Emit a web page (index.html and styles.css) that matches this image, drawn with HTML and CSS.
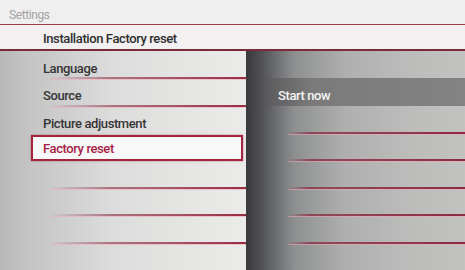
FILE: index.html
```html
<!DOCTYPE html>
<html>
<head>
<meta charset="utf-8">
<link rel="stylesheet" href="styles.css">
</head>
<body>
<div class="screen">
  <div class="title">Settings</div>
  <div class="crumb">Installation Factory reset</div>
  <div class="panes">
    <div class="left">
      <div class="row sep">Language</div>
      <div class="row sep">Source</div>
      <div class="row">Picture adjustment</div>
      <div class="row selected"><span class="box">Factory reset</span></div>
      <div class="row sep"></div>
      <div class="row sep"></div>
      <div class="row sep"></div>
      <div class="row"></div>
    </div>
    <div class="right">
      <div class="row"></div>
      <div class="row band">Start now</div>
      <div class="row sep"></div>
      <div class="row sep"></div>
      <div class="row sep"></div>
      <div class="row sep"></div>
      <div class="row sep"></div>
      <div class="row"></div>
    </div>
  </div>
</div>
</body>
</html>
```
FILE: styles.css
```css
html, body {
  margin: 0;
  padding: 0;
  background: #efefef;
}
.screen {
  width: 465px;
  height: 270px;
  overflow: hidden;
  display: flex;
  flex-direction: column;
  font-family: Roboto, "Liberation Sans", sans-serif;
  font-size: 13px;
  font-weight: 500;
  letter-spacing: -0.4px;
  background: #f0efef;
}
.title {
  height: 26px;
  box-sizing: border-box;
  padding: 8px 0 0 9px;
  color: #a2a2a2;
  font-size: 12px;
  font-weight: 400;
  border-bottom: 1px solid #9c3d4c;
  box-shadow: 0 1px 0 #f3c8d0;
}
.crumb {
  height: 26px;
  box-sizing: border-box;
  padding: 6px 0 0 43px;
  color: #2f2f2f;
  border-bottom: 2px solid #7a2c36;
  background: #f2f0f0;
}
.panes {
  flex: 1;
  display: flex;
}
.left {
  width: 246px;
  display: flex;
  flex-direction: column;
  background: linear-gradient(to right, #b9b9b9 0, #c4c4c4 12%, #dcdcdc 45%, #e6e6e4 80%, #ebebea 100%);
}
.right {
  flex: 1;
  display: flex;
  flex-direction: column;
  background: linear-gradient(to right, #38383b 0, #55565a 8%, #8e8f90 22%, #aeafae 45%, #bcbcbb 75%, #c2c2c1 100%);
}
.row {
  height: 27.4px;
  flex: none;
  box-sizing: border-box;
  position: relative;
  display: flex;
  align-items: center;
  padding-left: 43px;
  padding-top: 8px;
  color: #363636;
}
.left .row.sep::after {
  content: "";
  position: absolute;
  left: 50px;
  right: 0;
  bottom: -1px;
  height: 2px;
  background: linear-gradient(to right, rgba(140, 50, 70, 0) 0, rgba(140, 50, 70, 0.6) 30%, #9a2c42 100%);
  box-shadow: 0 1px 0 rgba(240, 170, 185, 0.6);
}
.right .row.sep::after {
  content: "";
  position: absolute;
  left: 42px;
  right: 0;
  bottom: -1px;
  height: 2px;
  background: linear-gradient(to right, rgba(140, 50, 70, 0) 0, rgba(140, 50, 70, 0.8) 12%, #8e2a40 100%);
  box-shadow: 0 1px 0 rgba(240, 170, 185, 0.5);
}
.selected {
  padding-left: 31px;
  padding-right: 3px;
  padding-top: 2px;
}
.box {
  flex: 1;
  height: 26px;
  box-sizing: border-box;
  display: flex;
  align-items: center;
  padding-left: 10px;
  padding-top: 1px;
  background: #f8f8f8;
  border: 2px solid #a3243f;
  color: #a51f45;
  box-shadow: 0 0 2px rgba(160, 40, 70, 0.5);
}
.band {
  padding-left: 32px;
  color: #f4f4f4;
  background: linear-gradient(to right, #3a3a3d 0, #5c5c5e 10%, #7a7a7b 30%, #838383 100%);
}
```
